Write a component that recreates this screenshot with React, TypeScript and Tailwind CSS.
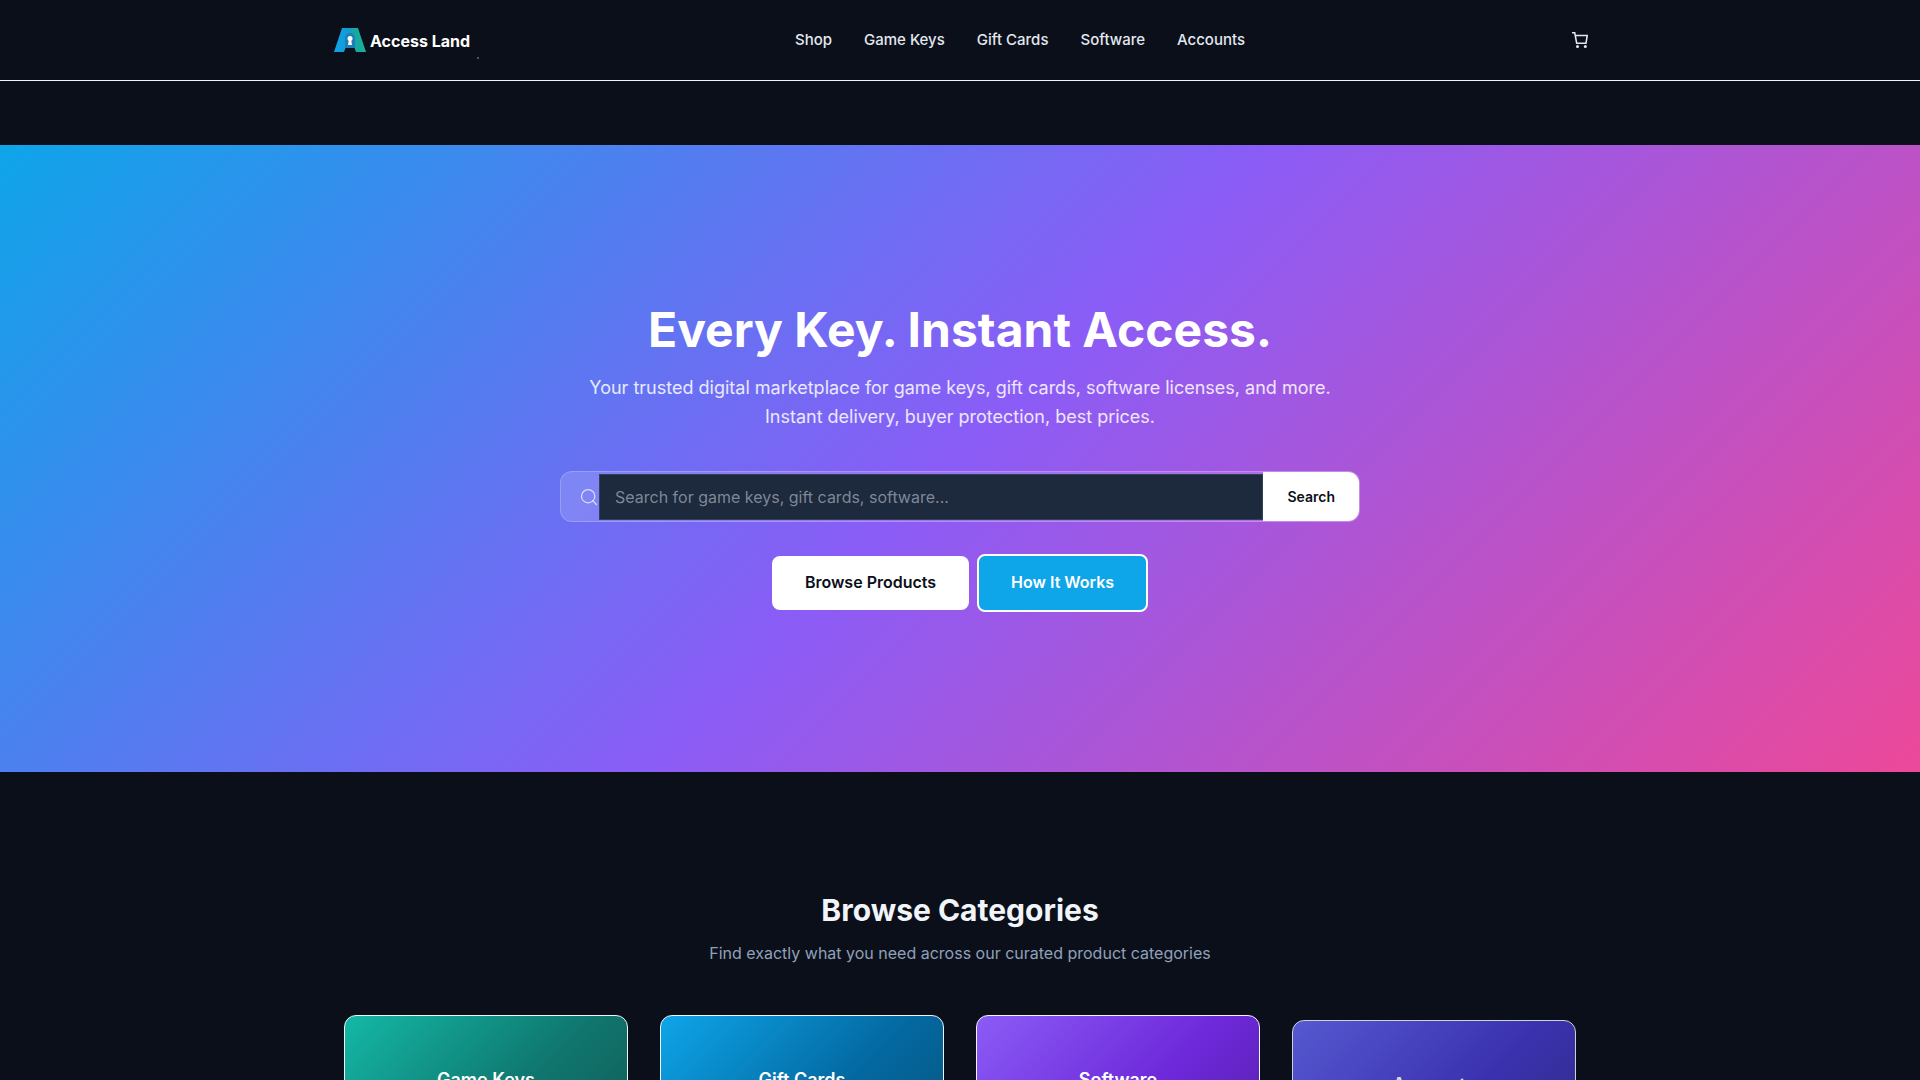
import { Search } from 'lucide-react'

const navLinks = ['Shop', 'Game Keys', 'Gift Cards', 'Software', 'Accounts']

const categories = [
    { name: 'Game Keys', gradient: 'bg-[linear-gradient(135deg,#14b8a6,#0f766e_50%,#134e4a)]', state: 'border-slate-100' },
    { name: 'Gift Cards', gradient: 'bg-[linear-gradient(135deg,#0ea5e9,#0369a1_50%,#0c4a6e)]', state: 'border-slate-100' },
    { name: 'Software', gradient: 'bg-[linear-gradient(135deg,#8b5cf6,#6d28d9_50%,#4c1d95)]', state: 'border-slate-100' },
    { name: 'Accounts', gradient: 'bg-[linear-gradient(135deg,#6366f1,#4338ca_50%,#312e81)]', state: 'border-slate-100 opacity-85 mt-[5px]' },
]

function Logo() {
    return (
        <a href="#" className="relative flex w-40 items-center gap-1 pl-3.5 text-base font-bold text-white">
            <svg width="32" height="24" viewBox="0 0 32 24" aria-hidden="true">
                <defs>
                    <linearGradient id="logo-a" x1="0" y1="0" x2="1" y2="0">
                        <stop offset="0" stopColor="#0ea5e9" />
                        <stop offset="0.5" stopColor="#1498cf" />
                        <stop offset="0.55" stopColor="#14a5a8" />
                        <stop offset="1" stopColor="#1fae94" />
                    </linearGradient>
                </defs>
                <path d="M8 0H24L32 24H22L20.500 20H11.500L10 24H0Z" fill="url(#logo-a)" />
                <path d="M11 20V10a5 5 0 0 1 10 0V20Z" fill="#1d7fb8" />
                <circle cx="16" cy="10.500" r="2.500" fill="#fff" />
                <path d="M15 11H17L18 17H14Z" fill="#fff" />
            </svg>
            <span className="pt-px">Access Land</span>
            <span className="absolute right-px -bottom-1.5 size-0.5 bg-slate-600" />
        </a>
    )
}

function CartIcon() {
    return (
        <svg width="16" height="16" viewBox="0 0 16 16" fill="none" stroke="#e2e8f0" strokeWidth="1.600" aria-hidden="true">
            <path d="M0 0.700H2.700L4.700 11.300H14L15.200 3.500H3.200" />
            <circle cx="5.500" cy="14.500" r="1.500" fill="#e2e8f0" stroke="none" />
            <circle cx="13.300" cy="14.500" r="1.500" fill="#e2e8f0" stroke="none" />
        </svg>
    )
}

export default function App() {
    return (
        <div className="h-screen overflow-hidden bg-[#0b0f19] font-['Inter',sans-serif] text-slate-100">
            <header className="border-b border-slate-100">
                <div className="mx-auto flex h-20 max-w-7xl items-center justify-between">
                    <Logo />
                    <nav className="flex gap-8">
                        {navLinks.map((link) => (
                            <a key={link} href="#" className="text-[15px] font-medium text-slate-200">
                                {link}
                            </a>
                        ))}
                    </nav>
                    <button type="button" aria-label="Cart" className="p-3">
                        <CartIcon />
                    </button>
                </div>
            </header>

            <main>
                {/* Hero */}
                <section className="mt-16 flex flex-col items-center bg-[linear-gradient(135deg,#0ea5e9,#8b5cf6_50%,#ec4899)] px-6 py-40 text-center">
                    <h1 className="text-5xl leading-[50px] font-bold text-white">Every Key. Instant Access.</h1>
                    <p className="mt-[18px] max-w-[800px] text-lg leading-[29px] text-white/85">
                        Your trusted digital marketplace for game keys, gift cards, software licenses, and more. Instant delivery, buyer protection, best prices.
                    </p>
                    <form className="mt-10 flex w-full max-w-[800px] overflow-hidden rounded-xl border border-white/20 bg-white/15">
                        <label htmlFor="search" className="flex w-[38px] items-center justify-end text-white/70">
                            <Search size={20} strokeWidth={1.5} aria-label="Search products" />
                        </label>
                        <input
                            id="search"
                            type="text"
                            placeholder="Search for game keys, gift cards, software..."
                            className="mt-0.5 mb-px h-[46px] min-w-0 flex-1 border border-slate-700 bg-slate-800 px-[15px] text-base text-white outline-none placeholder:text-gray-400/80"
                        />
                        <button type="submit" className="bg-white px-6 text-sm font-semibold text-[#0b0f19]">
                            Search
                        </button>
                    </form>
                    <div className="mt-8 flex items-center gap-2">
                        <button type="button" className="rounded-lg bg-white px-[33px] pt-3.5 pb-4 text-base font-semibold text-[#0b0f19]">
                            Browse Products
                        </button>
                        <button type="button" className="rounded-lg border-2 border-white bg-[#0ea5e9] px-8 pt-3.5 pb-4 text-base font-semibold text-white">
                            How It Works
                        </button>
                    </div>
                </section>

                {/* Categories */}
                <section className="mx-auto max-w-7xl px-6 pt-[120px]">
                    <h2 className="text-center text-[30px] leading-9 font-bold">Browse Categories</h2>
                    <p className="mt-[13px] text-center text-base text-slate-400">
                        Find exactly what you need across our curated product categories
                    </p>
                    <div className="mt-[50px] grid grid-cols-4 items-start gap-8">
                        {categories.map((category) => (
                            <a
                                key={category.name}
                                href="#"
                                className={`flex h-[220px] justify-center rounded-xl border pt-[50px] ${category.gradient} ${category.state}`}
                            >
                                <h3 className="text-lg font-semibold text-white">{category.name}</h3>
                            </a>
                        ))}
                    </div>
                </section>
            </main>
        </div>
    )
}
